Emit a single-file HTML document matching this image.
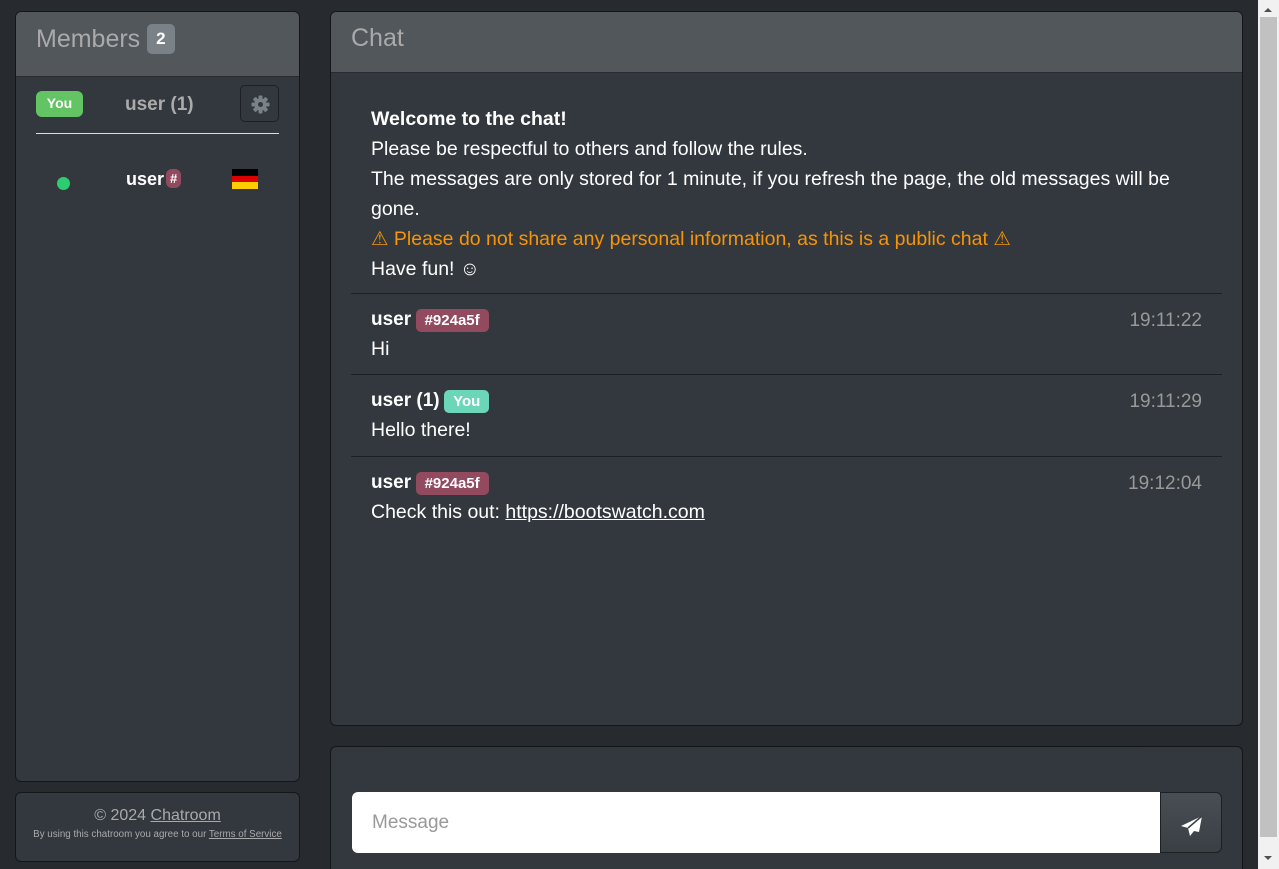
<!DOCTYPE html>
<html style="height:869px;overflow:hidden"><head><style>
*{box-sizing:border-box}
body{margin:0;width:1279px;height:869px;overflow:hidden;background:#272b30;font-family:"Liberation Sans","DejaVu Sans",sans-serif;color:#fff;position:relative}
.card{position:absolute;background:#32383e;border:1px solid rgba(0,0,0,.6);border-radius:6px;overflow:hidden}
.hdr{background:#52575c;border-bottom:1px solid rgba(0,0,0,.5);color:#aaa;font-size:25px;padding-left:20px}
.badge{display:inline-block;border-radius:5px;font-weight:bold;font-size:15px;color:#fff;padding:3px 9px}
.msg{position:absolute;left:20px;right:20px;border-top:1px solid #1c1f23;padding-left:20px}
.msg .n{font-weight:bold;font-size:19px}
.t{position:absolute;right:20px;color:#999;font-size:19px}
.txt{font-size:19.5px;margin-top:6px}
</style></head><body>
<div class="card" style="left:15px;top:11px;width:285px;height:771px">
  <div class="hdr" style="height:65px;line-height:54px">Members <span class="badge" style="background:#7a8288;font-size:17px;padding:4px 9px;vertical-align:3px;line-height:22px">2</span></div>
  <div style="position:absolute;left:20px;top:79px;width:47px;height:26px;background:#62c462;border-radius:6px;font-weight:bold;font-size:14px;text-align:center;line-height:25px">You</div>
  <div style="position:absolute;left:109px;top:82px;color:#aaa;font-weight:bold;font-size:19px">user (1)</div>
  <div style="position:absolute;left:224px;top:73px;width:39px;height:37px;border:1px solid #1c1f23;border-radius:5px;background:#32383e">
    <svg width="39" height="37" viewBox="0 0 39 37"><g transform="translate(19.5,18.5)" fill="#7a8288"><circle r="6"/><rect x="-2" y="-9" width="4" height="18" rx="1"/><rect x="-2" y="-9" width="4" height="18" rx="1" transform="rotate(45)"/><rect x="-2" y="-9" width="4" height="18" rx="1" transform="rotate(90)"/><rect x="-2" y="-9" width="4" height="18" rx="1" transform="rotate(135)"/><circle r="2.5" fill="#32383e"/></g></svg>
  </div>
  <div style="position:absolute;left:20px;top:121px;width:243px;height:1px;background:#ddd"></div>
  <div style="position:absolute;left:41px;top:165px;width:13px;height:13px;border-radius:50%;background:#2ecc71"></div>
  <div style="position:absolute;left:110px;top:157px;font-weight:bold;font-size:18px">user<span style="display:inline-block;background:#924a5f;border-radius:6px;font-size:13px;padding:2px 4px;vertical-align:2px;margin-left:2px">#</span></div>
  <div style="position:absolute;left:216px;top:157px;width:26px;height:20px"><div style="height:33.3%;background:#000"></div><div style="height:33.3%;background:#d00"></div><div style="height:33.4%;background:#fc0"></div></div>
</div>
<div class="card" style="left:15px;top:792px;width:285px;height:70px;text-align:center;color:#aaa">
  <div style="font-size:16px;margin-top:14px">© 2024 <u>Chatroom</u></div>
  <div style="font-size:9.8px;margin-top:4px;white-space:nowrap">By using this chatroom you agree to our <u>Terms of Service</u></div>
</div>
<div class="card" style="left:330px;top:11px;width:913px;height:715px">
  <div class="hdr" style="height:61px;line-height:52px">Chat</div>
  <div style="position:absolute;left:40px;top:92px;font-size:19.5px;line-height:30px;white-space:nowrap">
    <b>Welcome to the chat!</b><br>Please be respectful to others and follow the rules.<br>The messages are only stored for 1 minute, if you refresh the page, the old messages will be<br>gone.<br><span style="color:#f89406">⚠ Please do not share any personal information, as this is a public chat ⚠</span><br>Have fun! ☺
  </div>
  <div class="msg" style="top:281px;height:82px"><div style="margin-top:15px"><span class="n">user</span> <span class="badge" style="background:#924a5f">#924a5f</span></div><div class="t" style="top:16px">19:11:22</div><div class="txt">Hi</div></div>
  <div class="msg" style="top:362px;height:82px"><div style="margin-top:15px"><span class="n">user (1)</span> <span class="badge" style="background:#6cd6b8">You</span></div><div class="t" style="top:16px">19:11:29</div><div class="txt">Hello there!</div></div>
  <div class="msg" style="top:444px;height:82px"><div style="margin-top:15px"><span class="n">user</span> <span class="badge" style="background:#924a5f">#924a5f</span></div><div class="t" style="top:16px">19:12:04</div><div class="txt">Check this out: <u>https://bootswatch.com</u></div></div>
</div>
<div class="card" style="left:330px;top:746px;width:913px;height:123px;border-bottom:none;border-radius:6px 6px 0 0">
  <div style="position:absolute;left:21px;top:45px;width:809px;height:61px;background:#fff;border-radius:6px 0 0 6px;color:#999;font-size:19px;line-height:61px;padding-left:20px">Message</div>
  <div style="position:absolute;left:829px;top:45px;width:62px;height:61px;background:linear-gradient(#484e55,#3a3f44);border:1px solid #1c1f23;border-radius:0 6px 6px 0">
    <svg width="62" height="61" viewBox="0 0 62 61"><path d="M41 23 L20 33 L27 35 L29 43 L33 38 L38 39 Z" fill="#fff"/><path d="M41 23 L27 35" stroke="#3a3f44" stroke-width="1.5"/></svg>
  </div>
</div>
<div style="position:absolute;left:1258px;top:0;width:21px;height:869px;background:#f1f1f1">
  <div style="position:absolute;left:2px;top:17px;width:17px;height:820px;background:#c1c1c1"></div>
  <div style="position:absolute;left:6px;top:856px;border:4px solid transparent;border-top:4px solid #505050"></div>
  <div style="position:absolute;left:6px;top:4px;border:4px solid transparent;border-bottom:4px solid #505050"></div>
</div>
</body></html>
